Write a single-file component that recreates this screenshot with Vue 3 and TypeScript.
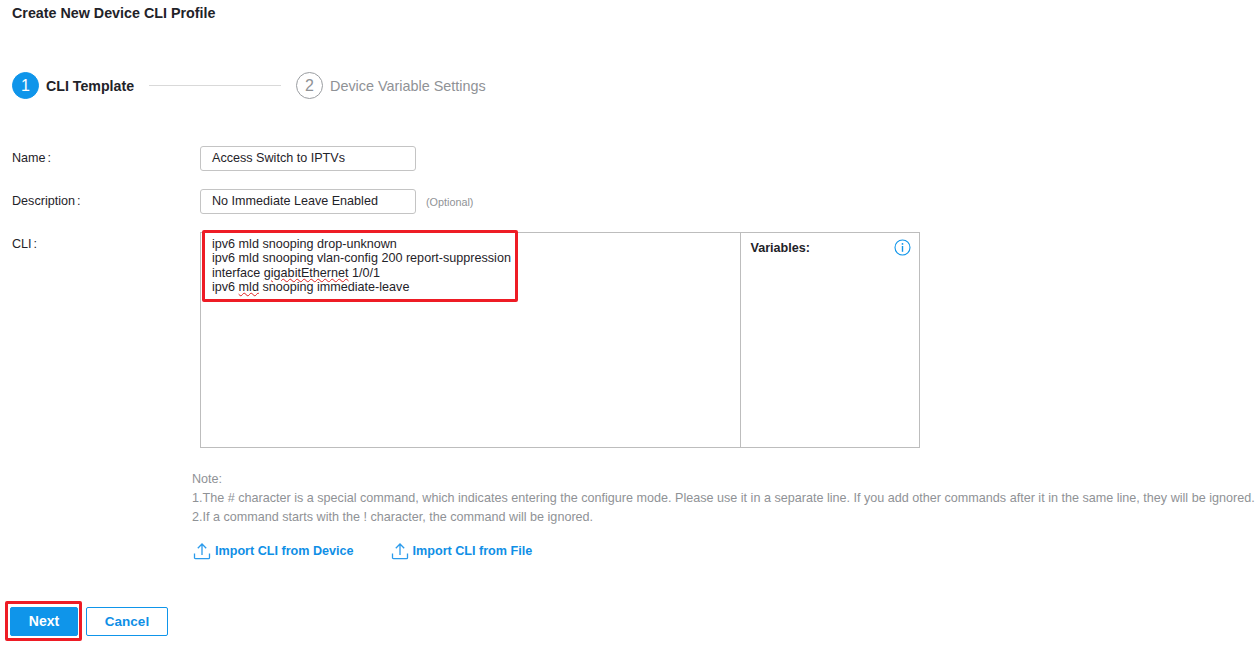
<script setup lang="ts">
const cliLines = ['ipv6 mld snooping drop-unknown', 'ipv6 mld snooping vlan-config 200 report-suppression']
const imports = ['Import CLI from Device', 'Import CLI from File']
</script>

<template>
  <div class="page">
    <h1 class="title">Create New Device CLI Profile</h1>

    <div class="stepper">
      <span class="dot active">1</span>
      <span class="step-label active">CLI Template</span>
      <span class="step-line"></span>
      <span class="dot">2</span>
      <span class="step-label">Device Variable Settings</span>
    </div>

    <div class="row name-row">
      <label class="label">Name<i>:</i></label>
      <div class="input">Access Switch to IPTVs</div>
    </div>
    <div class="row desc-row">
      <label class="label">Description<i>:</i></label>
      <div class="input">No Immediate Leave Enabled</div>
      <span class="optional">(Optional)</span>
    </div>
    <div class="row cli-row">
      <label class="label">CLI<i>:</i></label>
      <div class="cli-box">
        <div class="cli-text">
          <div v-for="l in cliLines" :key="l">{{ l }}</div>
          <div>interface <span class="wavy">gigabitEthernet</span> 1/0/1</div>
          <div>ipv6 <span class="wavy">mld</span> snooping immediate-leave</div>
          <span class="red-box cli-mark"></span>
        </div>
        <div class="vars">
          <strong>Variables:</strong>
          <svg class="info" width="17" height="17" viewBox="0 0 17 17" fill="none">
            <circle cx="8.5" cy="8.5" r="7.5" stroke="#0f95ea" stroke-width="1.1" />
            <circle cx="8.5" cy="4.9" r="0.9" fill="#0f95ea" />
            <path d="M8.5 7v5.8" stroke="#0f95ea" stroke-width="1.4" />
          </svg>
        </div>
      </div>
    </div>

    <div class="note">
      <div>Note:</div>
      <div>1.The # character is a special command, which indicates entering the configure mode. Please use it in a separate line. If you add other commands after it in the same line, they will be ignored.</div>
      <div>2.If a command starts with the ! character, the command will be ignored.</div>
    </div>

    <div class="imports">
      <a v-for="t in imports" :key="t" class="imp">
        <svg width="18" height="18" viewBox="0 0 18 18" fill="none" stroke="#2b9bec" stroke-width="1.3">
          <path d="M9 13V2M4.8 6.2 9 2l4.2 4.2" />
          <path d="M1.5 11.5v4.2a1 1 0 0 0 1 1h13a1 1 0 0 0 1-1v-4.2" />
        </svg>
        {{ t }}
      </a>
    </div>

    <div class="actions">
      <button class="btn primary">Next<span class="red-box next-mark"></span></button>
      <button class="btn ghost">Cancel</button>
    </div>
  </div>
</template>

<style>
html, body { margin: 0; background: #fff; }
</style>

<style scoped>
.page {
  width: 1260px;
  height: 646px;
  overflow: hidden;
  box-sizing: border-box;
  padding: 6px 0 0 12px;
  font-family: "Liberation Sans", Arial, sans-serif;
  font-size: 12.6px;
  color: #1f2329;
}
.title {
  margin: 0;
  font-size: 14.3px;
  line-height: 15px;
  font-weight: 700;
}
.stepper {
  display: flex;
  align-items: center;
  margin-top: 51px;
  height: 27px;
}
.dot {
  width: 27px;
  height: 27px;
  box-sizing: border-box;
  border-radius: 50%;
  border: 1px solid #9a9da1;
  color: #8f9296;
  font-size: 16px;
  display: flex;
  align-items: center;
  justify-content: center;
}
.dot.active { background: #0f95ea; border-color: #0f95ea; color: #fff; }
.step-label { margin-left: 7px; font-size: 14.4px; color: #8f9296; }
.step-label.active { font-weight: 700; color: #1f2329; font-size: 14.2px; }
.step-line { width: 132px; height: 1px; background: #d9d9d9; margin: 0 15px; }
.row { display: flex; align-items: flex-start; }
.name-row { margin-top: 47px; }
.desc-row { margin-top: 18px; align-items: center; }
.cli-row { margin-top: 18px; }
.label { width: 188px; flex: none; line-height: 24px; }
.desc-row .label { line-height: 22px; margin-bottom: 2px; }
.label i { font-style: normal; margin-left: 2px; }
.input {
  width: 216px;
  height: 25px;
  box-sizing: border-box;
  border: 1px solid #c4c4c4;
  border-radius: 3px;
  padding: 0 11px;
  line-height: 22px;
}
.optional { margin-left: 10px; font-size: 10.8px; color: #8f9296; }
.cli-box {
  width: 720px;
  height: 216px;
  box-sizing: border-box;
  border: 1px solid #bdbdbd;
  display: flex;
}
.cli-text {
  position: relative;
  width: 540px;
  box-sizing: border-box;
  padding: 4px 0 0 11px;
  line-height: 14.35px;
  border-right: 1px solid #bdbdbd;
}
.wavy { text-decoration: underline wavy #e02020 1.2px; text-underline-offset: 1px; }
.red-box {
  position: absolute;
  box-sizing: border-box;
  border: 3px solid #ee1c25;
  border-radius: 2px;
  pointer-events: none;
}
.cli-mark { left: 1px; top: -3px; width: 316px; height: 72px; }
.vars {
  flex: 1;
  display: flex;
  justify-content: space-between;
  align-items: flex-start;
  padding: 7px 8px 0 9.5px;
  line-height: 16px;
}
.info { margin-top: -1px; }
.note {
  margin: 22px 0 0 180px;
  color: #8f9296;
  line-height: 19px;
  white-space: nowrap;
}
.imports { display: flex; gap: 37px; margin: 15px 0 0 181px; }
.imp {
  display: flex;
  align-items: center;
  gap: 4px;
  color: #0f8fe6;
  font-weight: 700;
  font-size: 12.6px;
}
.actions { display: flex; gap: 8px; margin: 47px 0 0 -2px; }
.btn {
  position: relative;
  width: 82px;
  height: 29px;
  box-sizing: border-box;
  border-radius: 2px;
  font-family: inherit;
  font-weight: 700;
  font-size: 13.5px;
  padding: 0;
}
.primary { width: 68px; background: #0f95ea; border: 1px solid #0f95ea; color: #fff; font-size: 14px; padding-bottom: 2px; }
.ghost { background: #fff; border: 1px solid #0f95ea; color: #0f8fe6; }
.next-mark { left: -6px; top: -7px; width: 77px; height: 40px; }
</style>
